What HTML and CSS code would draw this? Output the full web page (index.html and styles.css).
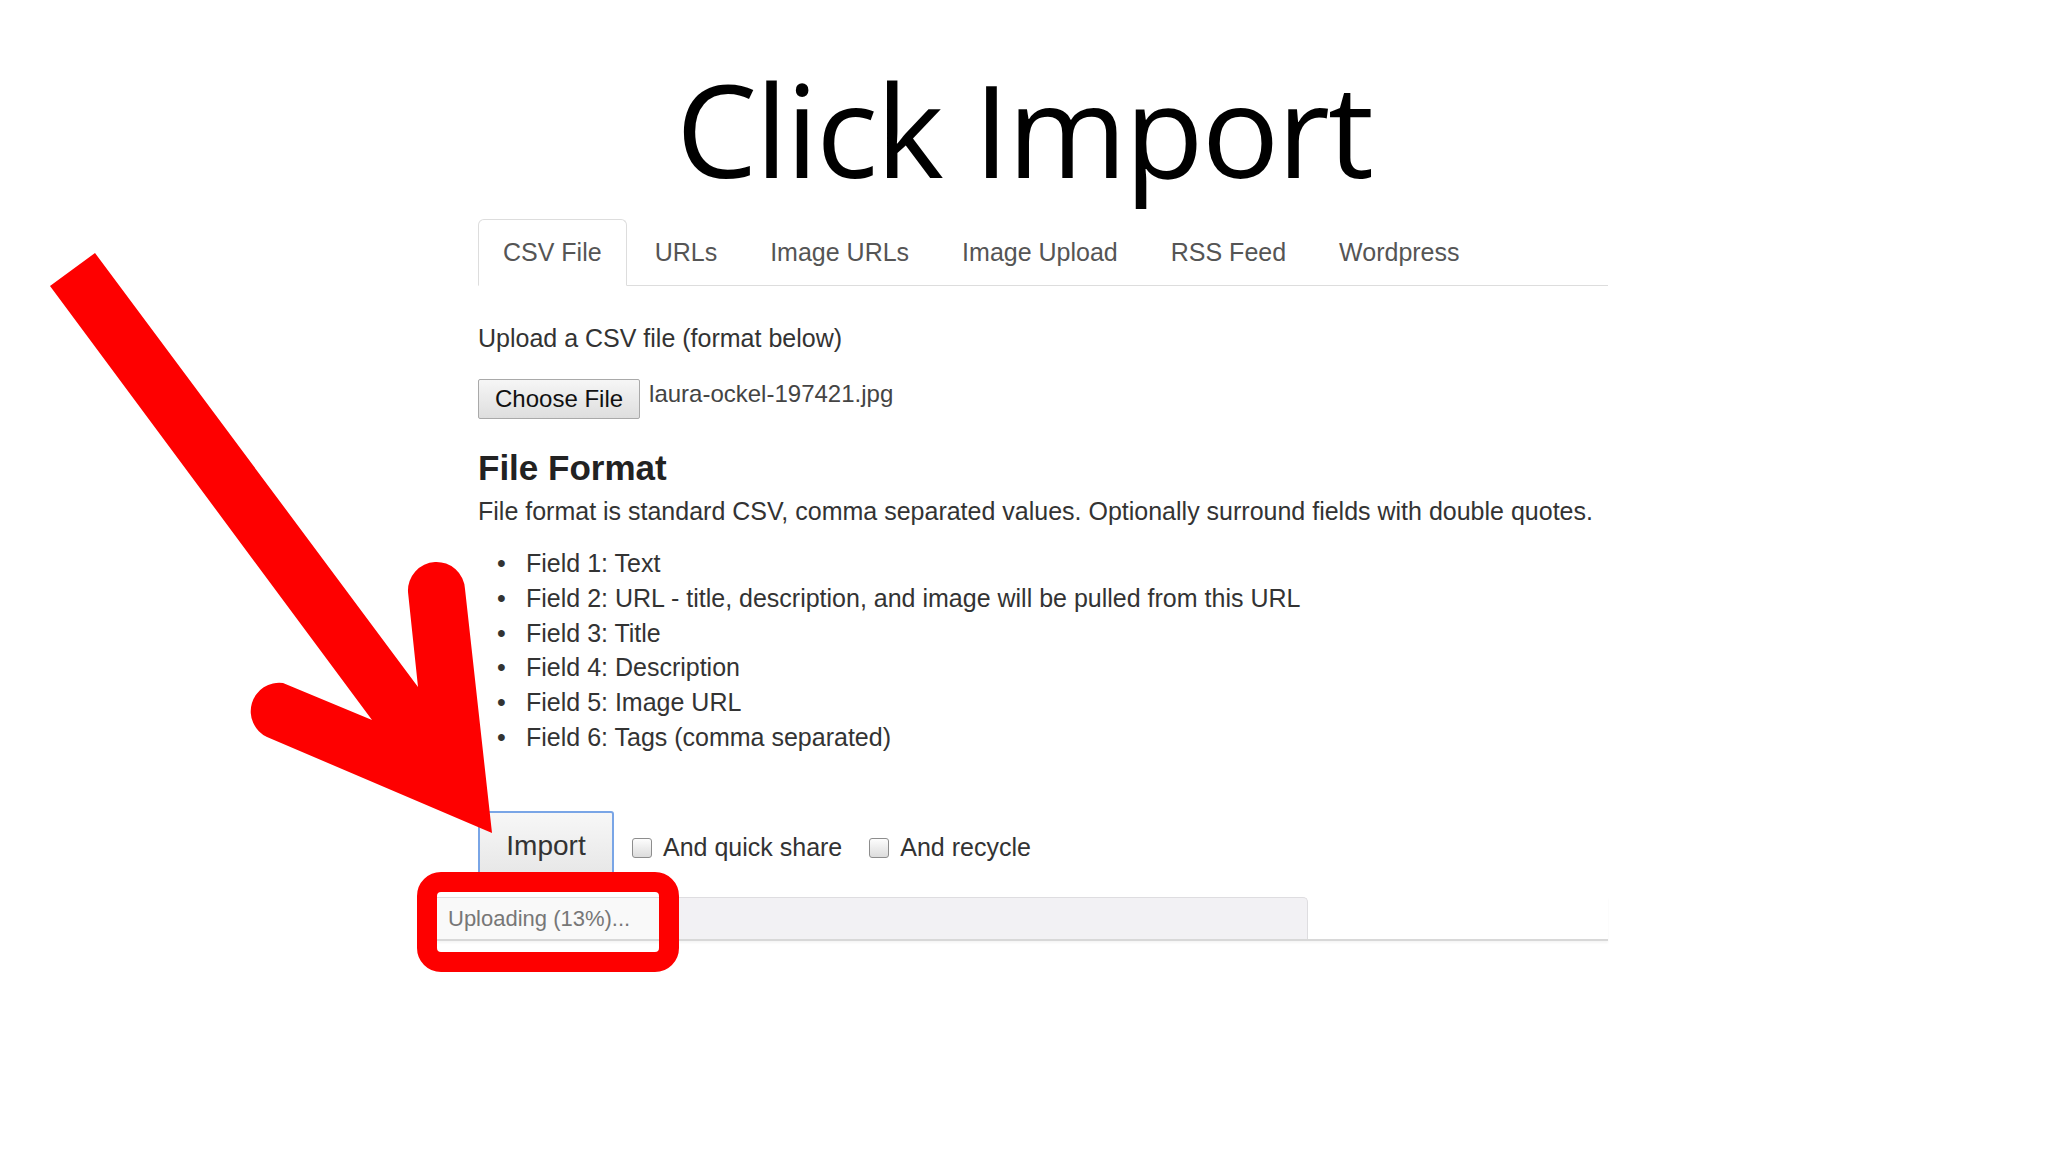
FILE: index.html
```html
<!DOCTYPE html>
<html lang="en">
<head>
    <meta charset="UTF-8">
    <meta name="viewport" content="width=device-width, initial-scale=1.0">
    <title>Click Import</title>
    <link rel="stylesheet" href="styles.css">
</head>
<body>
    <h1 class="title">Click Import</h1>

    <div class="panel">
        <ul class="tabs">
            <li class="tab active">CSV File</li>
            <li class="tab">URLs</li>
            <li class="tab">Image URLs</li>
            <li class="tab">Image Upload</li>
            <li class="tab">RSS Feed</li>
            <li class="tab">Wordpress</li>
        </ul>

        <div class="tab-body">
            <p class="lead">Upload a CSV file (format below)</p>
            <div class="file-row">
                <button class="file-btn">Choose File</button>
                <span class="file-name">laura-ockel-197421.jpg</span>
            </div>

            <h2>File Format</h2>
            <p class="desc">File format is standard CSV, comma separated values. Optionally surround fields with double quotes.</p>
            <ul class="fields">
                <li>Field 1: Text</li>
                <li>Field 2: URL - title, description, and image will be pulled from this URL</li>
                <li>Field 3: Title</li>
                <li>Field 4: Description</li>
                <li>Field 5: Image URL</li>
                <li>Field 6: Tags (comma separated)</li>
            </ul>

            <div class="actions">
                <button class="import-btn">Import</button>
                <label class="check"><span class="box"></span>And quick share</label>
                <label class="check"><span class="box"></span>And recycle</label>
            </div>

            <div class="progress-wrap">
                <div class="progress">
                    <div class="progress-fill">Uploading (13%)...</div>
                </div>
            </div>
        </div>
    </div>

    <!-- annotations drawn on top of the screenshot -->
    <svg class="arrow" width="2048" height="1152" viewBox="0 0 2048 1152">
        <path d="M50 286 L95 253 L418 687 L408 592 A28.5 28.5 0 0 1 465 589 L492 833 L267 737 A28.5 28.5 0 0 1 283 683 L372 720 Z" fill="#fe0000"/>
    </svg>
    <div class="callout"></div>
</body>
</html>
```

FILE: styles.css
```css
body {
    margin: 0;
    background: #fff;
    font-family: 'Liberation Sans', Arial, sans-serif;
    color: #333;
    position: relative;
    min-height: 1152px;
    overflow: hidden;
}
.title {
    margin: 64px 0 26px;
    font-family: 'Open Sans', sans-serif;
    font-weight: 400;
    font-size: 129px;
    line-height: 129px;
    letter-spacing: -2px;
    text-align: center;
    color: #000;
}
.panel {
    width: 1130px;
    margin-left: 478px;
}
.tabs {
    display: flex;
    list-style: none;
    margin: 0;
    padding: 0;
    border-bottom: 1px solid #ddd;
}
.tab {
    font-size: 25px;
    line-height: 36px;
    padding: 14px 24px 15px;
    margin-right: 3px;
    margin-bottom: -1px;
    border: 1px solid transparent;
    border-radius: 6px 6px 0 0;
    color: #555;
}
.tab.active {
    border-color: #ddd;
    border-bottom-color: #fff;
    background: #fff;
}
.tab-body {
    padding-top: 34px;
    font-size: 25px;
    line-height: 35px;
}
.lead {
    margin: 0 0 23px;
    line-height: 36px;
}
.file-row {
    display: flex;
    align-items: flex-start;
    gap: 9px;
}
.file-btn {
    height: 40px;
    padding: 0 16px;
    font-family: 'Liberation Sans', Arial, sans-serif;
    font-size: 24px;
    color: #111;
    background: linear-gradient(#f6f6f6, #dedede);
    border: 1px solid #a9a9a9;
    border-radius: 2px;
}
.file-name {
    margin-top: -3px;
    line-height: 36px;
    font-size: 24px;
    color: #444;
}
h2 {
    margin: 29px 0 6px;
    font-size: 35px;
    line-height: 40px;
    font-weight: 700;
    color: #222;
}
.desc {
    margin: 0 0 17px;
}
.fields {
    margin: 0;
    padding-left: 48px;
    list-style: none;
    line-height: 34.8px;
}
.fields li::before {
    content: "\2022";
    display: inline-block;
    width: 29px;
    margin-left: -29px;
    color: #333;
}
.actions {
    display: flex;
    align-items: center;
    margin-top: 56px;
}
.import-btn {
    width: 136px;
    height: 70px;
    margin-right: 18px;
    font-family: 'Liberation Sans', Arial, sans-serif;
    font-size: 28px;
    color: #333;
    background: linear-gradient(#f7f7f7, #e6e6e6);
    border: 2px solid #79a5e6;
    border-radius: 3px;
}
.check {
    display: flex;
    align-items: center;
    margin-right: 27px;
    padding-top: 4px;
}
.box {
    width: 18px;
    height: 18px;
    margin-right: 11px;
    border: 1px solid #8d8d8d;
    border-radius: 3px;
    background: linear-gradient(#fdfdfd, #dcdcdc);
}
.progress-wrap {
    width: 1178px;
    margin: 16px 0 0 -48px;
    border-bottom: 2px solid #d8d8d8;
    box-shadow: 0 2px 2px rgba(0, 0, 0, 0.04);
}
.progress {
    display: flex;
    width: 878px;
    height: 42px;
    box-sizing: border-box;
    background: #f2f1f4;
    border: 1px solid #dedde0;
    border-bottom: none;
    border-radius: 0 5px 0 0;
}
.progress-fill {
    width: 232px;
    padding-left: 17px;
    box-sizing: border-box;
    display: flex;
    align-items: center;
    background: #f9f9f9;
    font-size: 22px;
    color: #777;
}
.arrow {
    position: absolute;
    left: 0;
    top: 0;
    pointer-events: none;
}
.callout {
    position: absolute;
    left: 417px;
    top: 872px;
    width: 262px;
    height: 100px;
    box-sizing: border-box;
    border: 20px solid #fe0000;
    border-radius: 24px;
}
```
